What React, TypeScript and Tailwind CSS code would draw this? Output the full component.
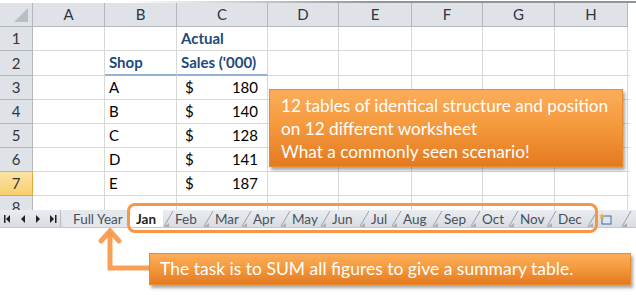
import React from "react";

const FONT = { fontFamily: "Lato, 'Open Sans', sans-serif" };

const colLetters = ["A", "B", "C", "D", "E", "F", "G", "H"];

type Row = { n: number; h: string; b?: React.ReactNode; c?: React.ReactNode; underline?: boolean };

const Money = ({ v }: { v: string }) => (
  <div className="flex w-full items-center justify-between pl-[8px] pr-[9px]">
    <span>$</span>
    <span>{v}</span>
  </div>
);

const rows: Row[] = [
  { n: 1, h: "h-[24px]", c: <span className="pl-[4px] font-bold text-[#1f497d]">Actual</span> },
  {
    n: 2,
    h: "h-[25px]",
    b: <span className="pl-[4px] font-bold text-[#1f497d]">Shop</span>,
    c: <span className="pl-[4px] font-bold text-[#1f497d]">Sales ('000)</span>,
    underline: true,
  },
  { n: 3, h: "h-[24px]", b: <span className="pl-[4px]">A</span>, c: <Money v="180" /> },
  { n: 4, h: "h-[24px]", b: <span className="pl-[4px]">B</span>, c: <Money v="140" /> },
  { n: 5, h: "h-[24px]", b: <span className="pl-[4px]">C</span>, c: <Money v="128" /> },
  { n: 6, h: "h-[24px]", b: <span className="pl-[4px]">D</span>, c: <Money v="141" /> },
  { n: 7, h: "h-[24px]", b: <span className="pl-[4px]">E</span>, c: <Money v="187" /> },
  { n: 8, h: "h-[24px]" },
];

const tabs: { name: string; w: string }[] = [
  { name: "Feb", w: "w-[40px]" },
  { name: "Mar", w: "w-[38px]" },
  { name: "Apr", w: "w-[39px]" },
  { name: "May", w: "w-[40px]" },
  { name: "Jun", w: "w-[39px]" },
  { name: "Jul", w: "w-[32px]" },
  { name: "Aug", w: "w-[41px]" },
  { name: "Sep", w: "w-[38px]" },
  { name: "Oct", w: "w-[38px]" },
  { name: "Nov", w: "w-[38px]" },
  { name: "Dec", w: "w-[41px]" },
];

const Slant = () => (
  <svg width="11" height="18" viewBox="0 0 11 18" className="shrink-0">
    <line x1="1" y1="16.5" x2="10" y2="1" stroke="#9aa1a9" strokeWidth="1" />
    <path d="M1 17 L6 17 L6 13 Z" fill="#a9aeb5" />
  </svg>
);

const Nav = () => (
  <svg width="60" height="18" viewBox="0 0 60 18">
    <g fill="#222">
      <rect x="4" y="5" width="1.5" height="8" />
      <path d="M10 5 L6 9 L10 13 Z" />
      <path d="M25 5 L21 9 L25 13 Z" />
      <path d="M36 5 L40 9 L36 13 Z" />
      <path d="M50 5 L54 9 L50 13 Z" />
      <rect x="55" y="5" width="1.5" height="8" />
    </g>
  </svg>
);

export default function App() {
  return (
    <div className="relative h-[295px] w-[636px] overflow-hidden bg-white" style={FONT}>
      {/* top frame line */}
      <div className="h-[1px] bg-white" />
      <div className="h-[2px] bg-[linear-gradient(to_right,#ffffff_20%,#8f949a_60%)]" />

      {/* sheet grid */}
      <div className="h-[207px] overflow-hidden">
        <div className="grid grid-cols-[33px_72px_72px_91px_71px_73px_71px_72px_73px_1fr] text-[15px] text-black">
          {/* header row */}
          <div className="relative h-[24px] border-b border-r border-[#b3b8be] bg-[#dfe3e8]">
            <svg width="18" height="18" viewBox="0 0 18 18" className="absolute bottom-[2px] right-[2px]">
              <path d="M16 2 L16 16 L2 16 Z" fill="#b9bec4" />
            </svg>
          </div>
          {colLetters.map((l) => (
            <div
              key={l}
              className="flex h-[24px] items-center justify-center border-b border-r border-[#b3b8be] bg-[#dfe3e8] text-[15px] text-[#2f3540]"
            >
              {l}
            </div>
          ))}
          <div className="h-[24px] bg-white" />

          {rows.map((r) => (
            <React.Fragment key={r.n}>
              <div
                className={`flex ${r.h} items-center justify-center border-r border-b text-[15px] ${
                  r.n === 7
                    ? "border-[#e3a73a] bg-[linear-gradient(#fbe3a4,#f7cf6e)] text-[#2f3540]"
                    : "border-[#b3b8be] bg-[#dfe3e8] text-[#2f3540]"
                }`}
              >
                {r.n}
              </div>
              <div className={`${r.h} border-r border-b border-[#d8d8d8]`} />
              <div
                className={`flex ${r.h} items-center border-r border-[#d8d8d8] ${
                  r.underline ? "border-b-2 border-b-[#95b3d7]" : "border-b"
                }`}
              >
                {r.b}
              </div>
              <div
                className={`flex ${r.h} items-center border-r border-[#d8d8d8] ${
                  r.underline ? "border-b-2 border-b-[#95b3d7]" : "border-b"
                }`}
              >
                {r.c}
              </div>
              <div className={`${r.h} border-r border-b border-[#d8d8d8]`} />
              <div className={`${r.h} border-r border-b border-[#d8d8d8]`} />
              <div className={`${r.h} border-r border-b border-[#d8d8d8]`} />
              <div className={`${r.h} border-r border-b border-[#d8d8d8]`} />
              <div className={`${r.h} border-r border-b border-[#d8d8d8]`} />
              <div className={`${r.h} w-[2px] border-b border-[#d8d8d8]`} />
            </React.Fragment>
          ))}
        </div>
      </div>

      {/* tab bar */}
      <div className="flex h-[18px] items-stretch border-b border-[#c4c9cf] bg-[linear-gradient(#e9ecf0,#d9dde3)] text-[13.5px] leading-[18px] text-[#4a505a]">
        <div className="w-[60px] shrink-0">
          <Nav />
        </div>
        <div className="w-[3px] shrink-0 border-l border-[#b8bdc3]" />
        <div className="flex w-[64px] shrink-0 items-center bg-[#e4e7ec] pl-[10px]">Full Year</div>
        <div className="flex w-[36px] shrink-0 items-center bg-white pl-[9px] font-bold text-[#222]">Jan</div>
        {tabs.map((t) => (
          <div key={t.name} className={`flex ${t.w} shrink-0 items-center`}>
            <Slant />
            <span className="pl-[1px]">{t.name}</span>
          </div>
        ))}
        <div className="flex shrink-0 items-center">
          <Slant />
          <svg width="14" height="14" viewBox="0 0 14 14" className="ml-[1px]">
            <rect x="3" y="4" width="9" height="8" fill="#dfe6f0" stroke="#4a6a96" strokeWidth="1" />
            <path d="M3 1 L4 3 L6 3 L4.5 4.5 L5 7 L3 5.5 L1 7 L1.5 4.5 L0 3 L2 3 Z" fill="#f6b22b" />
          </svg>
          <span className="w-[8px]" />
          <Slant />
        </div>
      </div>

      {/* callout 1 */}
      <div className="absolute left-[269px] top-[89px] flex h-[78px] w-[354px] flex-col justify-center border border-[#e98a2d] bg-[linear-gradient(#fcad5a,#f59a3e_45%,#e47a20)] pl-[11px] text-[17.2px] leading-[23px] text-white shadow-[2px_3px_3px_rgba(0,0,0,0.35)]">
        <div>12 tables of identical structure and position</div>
        <div>on 12 different worksheet</div>
        <div>What a commonly seen scenario!</div>
      </div>

      {/* highlight outline around month tabs */}
      <div className="absolute left-[127px] top-[203px] h-[30px] w-[471px] rounded-[8px] border-[3px] border-[#f79646]" />

      {/* arrow */}
      <svg className="absolute left-0 top-0" width="636" height="295" viewBox="0 0 636 295">
        <g stroke="#f79646" strokeWidth="5" fill="none" strokeOpacity="0.9">
          <path d="M150 268 L110 268 L110 232" strokeLinejoin="miter" />
          <path d="M101 241 L110 231 L119 241" strokeLinecap="round" strokeLinejoin="miter" />
        </g>
      </svg>

      {/* callout 2 */}
      <div className="absolute left-[149px] top-[253px] flex h-[32px] w-[482px] items-center border border-[#e98a2d] bg-[linear-gradient(#fcad5a,#f59a3e_45%,#e47a20)] pl-[10px] text-[17.5px] text-white shadow-[2px_3px_3px_rgba(0,0,0,0.35)]">
        The task is to SUM all figures to give a summary table.
      </div>
    </div>
  );
}
